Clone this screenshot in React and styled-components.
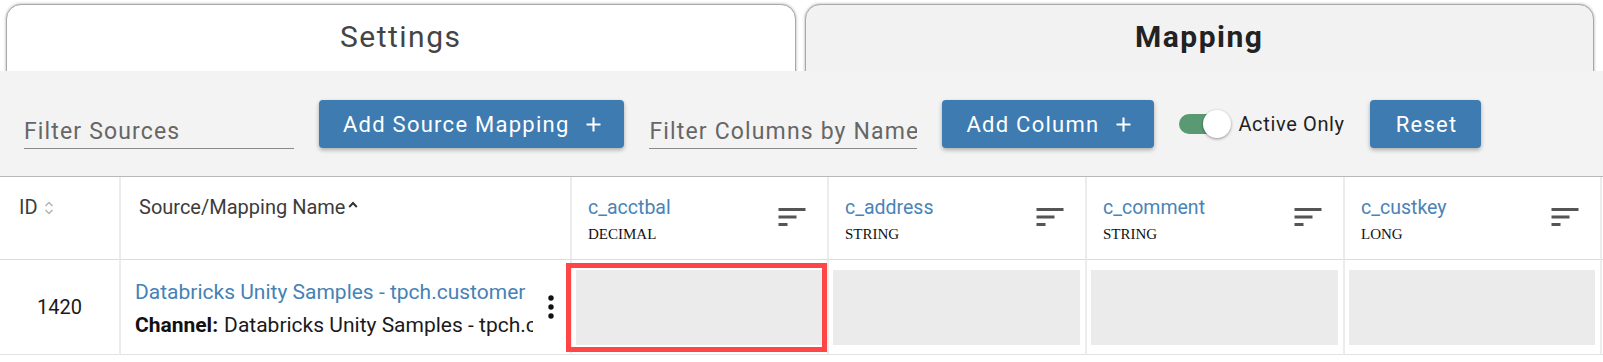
import React from "react";
import styled, { createGlobalStyle } from "styled-components";

const GlobalStyle = createGlobalStyle`
  html, body {
    margin: 0;
    padding: 0;
    background: #ffffff;
    font-family: Roboto, "Noto Sans", Arial, sans-serif;
    overflow: hidden;
  }
  * { box-sizing: border-box; }
`;

const Page = styled.div`
  width: 1603px;
  height: 362px;
  overflow: hidden;
  background: #fff;
`;

const TabsRow = styled.div`
  display: flex;
  gap: 9px;
  height: 71px;
  padding: 4px 9px 0 6px;
  overflow: hidden;
`;

const Tab = styled.div`
  flex: 1;
  height: 90px;
  border: 1px solid #a9a9a9;
  border-radius: 15px 15px 0 0;
  box-shadow: 0 0 3px rgba(0, 0, 0, 0.35);
  background: ${(p) => (p.$selected ? "#f2f2f2" : "#ffffff")};
  color: ${(p) => (p.$selected ? "#222222" : "#444444")};
  font-weight: ${(p) => (p.$selected ? 700 : 400)};
  font-size: 30px;
  line-height: 36px;
  letter-spacing: 1.5px;
  text-align: center;
  padding-top: 14px;
`;

const Toolbar = styled.div`
  display: flex;
  align-items: flex-end;
  gap: 25px;
  height: 106px;
  padding: 0 0 28px 24px;
  background: #f3f3f3;
  border-bottom: 1px solid #b8b8b8;
`;

const FilterInput = styled.input`
  width: ${(p) => p.$width}px;
  height: 31px;
  margin-bottom: -1px;
  padding: 0 0 4px 0;
  border: none;
  border-bottom: 1px solid #8a8a8a;
  background: transparent;
  font-family: Roboto, sans-serif;
  font-size: 23px;
  letter-spacing: 1.15px;
  color: #333;
  outline: none;
  &::placeholder {
    color: #666666;
    opacity: 1;
  }
`;

const ActionButton = styled.button`
  display: inline-flex;
  align-items: center;
  gap: 17px;
  height: 48px;
  padding: 0 ${(p) => (p.$icon ? "23px" : "24px")} 0 ${(p) => (p.$icon ? "24px" : "26px")};
  border: none;
  border-radius: 4px;
  background: #3e7bb1;
  color: #ffffff;
  font-family: Roboto, sans-serif;
  font-size: 22px;
  letter-spacing: 1.25px;
  box-shadow: 0 2px 4px rgba(0, 0, 0, 0.3);
  white-space: nowrap;
  cursor: pointer;
`;

const ToggleGroup = styled.div`
  display: flex;
  align-items: center;
  gap: 7px;
  height: 48px;
`;

const Switch = styled.div`
  position: relative;
  width: 52px;
  height: 28px;
  display: flex;
  align-items: center;
`;

const Track = styled.div`
  width: 48px;
  height: 20px;
  border-radius: 10px;
  background: #5a9a72;
`;

const Thumb = styled.div`
  position: absolute;
  left: 24px;
  top: 0;
  width: 28px;
  height: 28px;
  border-radius: 50%;
  background: #ffffff;
  box-shadow: 0 1px 3px rgba(0, 0, 0, 0.4);
`;

const ToggleLabel = styled.span`
  font-size: 20px;
  letter-spacing: 0.65px;
  color: #1f1f1f;
`;

const Table = styled.div`
  display: grid;
  grid-template-columns: 119px 451px 257px 258px 258px 257px 258px;
  width: 1858px;
`;

const HeadCell = styled.div`
  height: 83px;
  display: flex;
  justify-content: space-between;
  align-items: flex-start;
  padding: 19px 17px 0 ${(p) => p.$pad || 16}px;
  border-left: ${(p) => (p.$first ? "none" : "2px solid #ececec")};
  border-bottom: 1px solid #dcdcdc;
`;

const HeadLabel = styled.div`
  display: flex;
  align-items: center;
  gap: ${(p) => p.$gap || 6}px;
  font-size: 20px;
  line-height: 1.15;
  color: #3c3c3c;
`;

const ColInfo = styled.div`
  display: flex;
  flex-direction: column;
`;

const ColName = styled.span`
  font-size: 19.5px;
  line-height: 1.2;
  color: #4a83b7;
`;

const ColType = styled.span`
  margin-top: 6px;
  font-family: "Liberation Serif", "Times New Roman", serif;
  font-size: 15px;
  line-height: 18px;
  color: #111;
`;

const SortIcon = styled.svg`
  width: 36px;
  height: 36px;
  margin-top: 3px;
  flex-shrink: 0;
`;

const BodyCell = styled.div`
  position: relative;
  height: 95px;
  border-left: ${(p) => (p.$first ? "none" : "2px solid #ececec")};
  border-bottom: 1px solid #e2e2e2;
`;

const IdCell = styled(BodyCell)`
  display: flex;
  align-items: center;
  justify-content: center;
  font-size: 20px;
  line-height: 1.2;
  color: #1a1a1a;
`;

const SourceCell = styled(BodyCell)`
  display: flex;
  align-items: center;
  padding: 0 1px 0 14px;
`;

const SourceText = styled.div`
  flex: 1;
  min-width: 0;
  overflow: hidden;
  white-space: nowrap;
  font-size: 21px;
  line-height: 33px;
  margin-top: 3px;
`;

const SourceLink = styled.a`
  display: block;
  color: #4682b4;
  text-decoration: none;
`;

const ChannelLine = styled.div`
  color: #1a1a1a;
`;

const ChannelLabel = styled.b`
  font-weight: 700;
  margin-right: 6px;
  color: #111;
`;

const Kebab = styled.svg`
  width: 36px;
  height: 36px;
  flex-shrink: 0;
`;

const MapCell = styled(BodyCell)`
  padding: 10px 5px 9px 4px;
`;

const MapPlaceholder = styled.div`
  height: 75px;
  background: #ebebeb;
`;

const Highlight = styled.div`
  position: absolute;
  left: -6px;
  top: 3px;
  width: 261px;
  height: 89px;
  border: 5px solid #ff4646;
  pointer-events: none;
`;

const PlusIcon = () => (
  <svg width="15" height="15" viewBox="0 0 15 15">
    <path d="M7.5 0.5v14M0.5 7.5h14" stroke="#fff" strokeWidth="2.1" fill="none" />
  </svg>
);

const UpDown = () => (
  <svg width="10" height="16" viewBox="0 0 10 16">
    <path d="M1.5 6 L5 2.5 L8.5 6" stroke="#b3b3b3" strokeWidth="1.5" fill="none" />
    <path d="M1.5 10 L5 13.5 L8.5 10" stroke="#b3b3b3" strokeWidth="1.5" fill="none" />
  </svg>
);

const Up = () => (
  <svg width="10" height="7" viewBox="0 0 10 7" style={{ marginTop: "-6px" }}>
    <path d="M1.2 6 L5 2 L8.8 6" stroke="#333" strokeWidth="2" fill="none" />
  </svg>
);

const columns = [
  { name: "c_acctbal", type: "DECIMAL", highlight: true },
  { name: "c_address", type: "STRING" },
  { name: "c_comment", type: "STRING" },
  { name: "c_custkey", type: "LONG" },
  { name: "c_mktsegment", type: "STRING" },
];

export default function App() {
  return (
    <Page>
      <GlobalStyle />
      <TabsRow>
        <Tab>Settings</Tab>
        <Tab $selected>Mapping</Tab>
      </TabsRow>
      <Toolbar>
        <FilterInput $width={270} placeholder="Filter Sources" />
        <ActionButton $icon>
          Add Source Mapping <PlusIcon />
        </ActionButton>
        <FilterInput $width={268} placeholder="Filter Columns by Name" />
        <ActionButton $icon>
          Add Column <PlusIcon />
        </ActionButton>
        <ToggleGroup>
          <Switch>
            <Track />
            <Thumb />
          </Switch>
          <ToggleLabel>Active Only</ToggleLabel>
        </ToggleGroup>
        <ActionButton>Reset</ActionButton>
      </Toolbar>
      <Table>
        <HeadCell $first $pad={19}>
          <HeadLabel>
            ID <UpDown />
          </HeadLabel>
        </HeadCell>
        <HeadCell $pad={18}>
          <HeadLabel $gap={3}>
            Source/Mapping Name <Up />
          </HeadLabel>
        </HeadCell>
        {columns.map((c) => (
          <HeadCell key={c.name}>
            <ColInfo>
              <ColName>{c.name}</ColName>
              <ColType>{c.type}</ColType>
            </ColInfo>
            <SortIcon viewBox="0 0 24 24">
              <path d="M3 18h6v-2H3v2zM3 6v2h18V6H3zm0 7h12v-2H3v2z" fill="#555" />
            </SortIcon>
          </HeadCell>
        ))}

        <IdCell $first>1420</IdCell>
        <SourceCell>
          <SourceText>
            <SourceLink href="#">Databricks Unity Samples - tpch.customer</SourceLink>
            <ChannelLine>
              <ChannelLabel>Channel:</ChannelLabel>
              Databricks Unity Samples - tpch.customer
            </ChannelLine>
          </SourceText>
          <Kebab viewBox="0 0 24 24">
            <circle cx="12" cy="6" r="1.8" fill="#111" />
            <circle cx="12" cy="12" r="1.8" fill="#111" />
            <circle cx="12" cy="18" r="1.8" fill="#111" />
          </Kebab>
        </SourceCell>
        {columns.map((c) => (
          <MapCell key={c.name}>
            <MapPlaceholder />
            {c.highlight && <Highlight />}
          </MapCell>
        ))}
      </Table>
    </Page>
  );
}
